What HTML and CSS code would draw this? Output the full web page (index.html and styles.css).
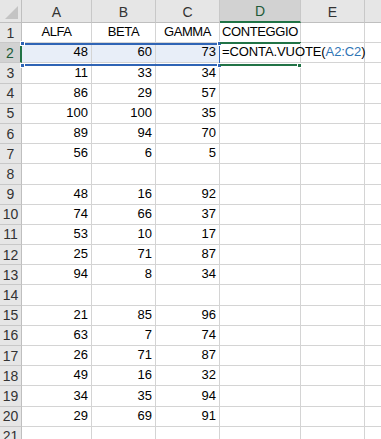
FILE: index.html
```html
<!DOCTYPE html>
<html>
<head>
<meta charset="utf-8">
<link rel="stylesheet" href="styles.css">
</head>
<body>
<div class="sheet">
  <div class="grid">
    <div class="corner"><span class="tri"></span></div>
    <div class="ch">A</div><div class="ch">B</div><div class="ch">C</div><div class="ch sel">D</div><div class="ch">E</div><div class="ch"></div>

    <div class="rh">1</div><div class="c ctr">ALFA</div><div class="c ctr">BETA</div><div class="c ctr">GAMMA</div><div class="c ctr">CONTEGGIO</div><div class="c"></div><div class="c"></div>
    <div class="rh rsel">2</div><div class="c n hl">48</div><div class="c n hl">60</div><div class="c n hl">73</div><div class="c edit">=CONTA.VUOTE(<span class="ref">A2:C2</span>)<span class="caret"></span></div><div class="c"></div><div class="c"></div>
    <div class="rh">3</div><div class="c n">11</div><div class="c n">33</div><div class="c n">34</div><div class="c"></div><div class="c"></div><div class="c"></div>
    <div class="rh">4</div><div class="c n">86</div><div class="c n">29</div><div class="c n">57</div><div class="c"></div><div class="c"></div><div class="c"></div>
    <div class="rh">5</div><div class="c n">100</div><div class="c n">100</div><div class="c n">35</div><div class="c"></div><div class="c"></div><div class="c"></div>
    <div class="rh">6</div><div class="c n">89</div><div class="c n">94</div><div class="c n">70</div><div class="c"></div><div class="c"></div><div class="c"></div>
    <div class="rh">7</div><div class="c n">56</div><div class="c n">6</div><div class="c n">5</div><div class="c"></div><div class="c"></div><div class="c"></div>
    <div class="rh">8</div><div class="c"></div><div class="c"></div><div class="c"></div><div class="c"></div><div class="c"></div><div class="c"></div>
    <div class="rh">9</div><div class="c n">48</div><div class="c n">16</div><div class="c n">92</div><div class="c"></div><div class="c"></div><div class="c"></div>
    <div class="rh">10</div><div class="c n">74</div><div class="c n">66</div><div class="c n">37</div><div class="c"></div><div class="c"></div><div class="c"></div>
    <div class="rh">11</div><div class="c n">53</div><div class="c n">10</div><div class="c n">17</div><div class="c"></div><div class="c"></div><div class="c"></div>
    <div class="rh">12</div><div class="c n">25</div><div class="c n">71</div><div class="c n">87</div><div class="c"></div><div class="c"></div><div class="c"></div>
    <div class="rh">13</div><div class="c n">94</div><div class="c n">8</div><div class="c n">34</div><div class="c"></div><div class="c"></div><div class="c"></div>
    <div class="rh">14</div><div class="c"></div><div class="c"></div><div class="c"></div><div class="c"></div><div class="c"></div><div class="c"></div>
    <div class="rh">15</div><div class="c n">21</div><div class="c n">85</div><div class="c n">96</div><div class="c"></div><div class="c"></div><div class="c"></div>
    <div class="rh">16</div><div class="c n">63</div><div class="c n">7</div><div class="c n">74</div><div class="c"></div><div class="c"></div><div class="c"></div>
    <div class="rh">17</div><div class="c n">26</div><div class="c n">71</div><div class="c n">87</div><div class="c"></div><div class="c"></div><div class="c"></div>
    <div class="rh">18</div><div class="c n">49</div><div class="c n">16</div><div class="c n">32</div><div class="c"></div><div class="c"></div><div class="c"></div>
    <div class="rh">19</div><div class="c n">34</div><div class="c n">35</div><div class="c n">94</div><div class="c"></div><div class="c"></div><div class="c"></div>
    <div class="rh">20</div><div class="c n">29</div><div class="c n">69</div><div class="c n">91</div><div class="c"></div><div class="c"></div><div class="c"></div>
    <div class="rh">21</div><div class="c"></div><div class="c"></div><div class="c"></div><div class="c"></div><div class="c"></div><div class="c"></div>
  </div>
  <div class="range"></div>
  <span class="h h1"></span><span class="h h2"></span><span class="h h3"></span><span class="h h4"></span>
  <div class="active"></div>
  <span class="gh"></span>
</div>
</body>
</html>
```

FILE: styles.css
```css
* { box-sizing: border-box; }
html, body { margin: 0; padding: 0; background: #fff; }
body { width: 381px; height: 439px; overflow: hidden; font-family: "Liberation Sans", sans-serif; font-size: 13px; color: #000; }
.sheet { position: relative; width: 381px; height: 439px; overflow: hidden; }
.grid {
  display: grid;
  grid-template-columns: 22px 70px 64px 64px 81px 64px 60px;
  grid-template-rows: 23px repeat(21, 20.2px);
}
.corner { background: #e6e6e6; border-right: 1px solid #bfbfbf; border-bottom: 1px solid #bfbfbf; position: relative; }
.tri { position: absolute; right: 3px; bottom: 3px; width: 0; height: 0; border-left: 13px solid transparent; border-bottom: 13px solid #c4c4c4; }
.ch { background: #e6e6e6; border-right: 1px solid #c8c8c8; border-bottom: 1px solid #bfbfbf; color: #333; font-size: 14px; display: flex; align-items: center; justify-content: center; padding-top: 1px; }
.ch.sel { background: #d2d2d2; border-bottom: 2px solid #217346; color: #1e5a38; }
.rh { background: #e6e6e6; border-right: 1px solid #bfbfbf; border-bottom: 1px solid #c8c8c8; color: #333; font-size: 14px; display: flex; align-items: center; justify-content: center; }
.rh.rsel { background: #d2d2d2; border-right: 2px solid #217346; color: #1e5a38; }
.c { border-right: 1px solid #d4d4d4; border-bottom: 1px solid #d4d4d4; display: flex; align-items: flex-end; padding: 0 3px 2px 3px; white-space: nowrap; line-height: 16px; }
.n { justify-content: flex-end; }
.ctr { justify-content: center; letter-spacing: -0.4px; }
.hl { background: #e8eef8; }
.edit { overflow: visible; position: relative; z-index: 2; padding-left: 2px; letter-spacing: -0.1px; }
.ref { color: #2f75b5; }
.caret { display: inline-block; width: 1px; height: 17px; background: #000; margin-left: 2px; margin-bottom: -1px; }
.range { position: absolute; left: 22px; top: 43px; width: 198px; height: 23px; border-top: 2px solid #2f64b5; border-bottom: 2px solid #2f64b5; border-right: 1px solid #2f64b5; }
.h { position: absolute; width: 5px; height: 5px; background: #2f64b5; border: 1px solid #fff; }
.h1 { left: 20px; top: 41px; }
.h2 { left: 217px; top: 41px; }
.h3 { left: 20px; top: 63px; }
.h4 { left: 217px; top: 63px; }
.active { position: absolute; left: 220px; top: 42px; width: 81px; height: 24px; border-top: 2px solid #217346; border-bottom: 2px solid #217346; }
.gh { position: absolute; left: 297px; top: 63px; width: 5px; height: 5px; background: #217346; border: 1px solid #fff; }
```
